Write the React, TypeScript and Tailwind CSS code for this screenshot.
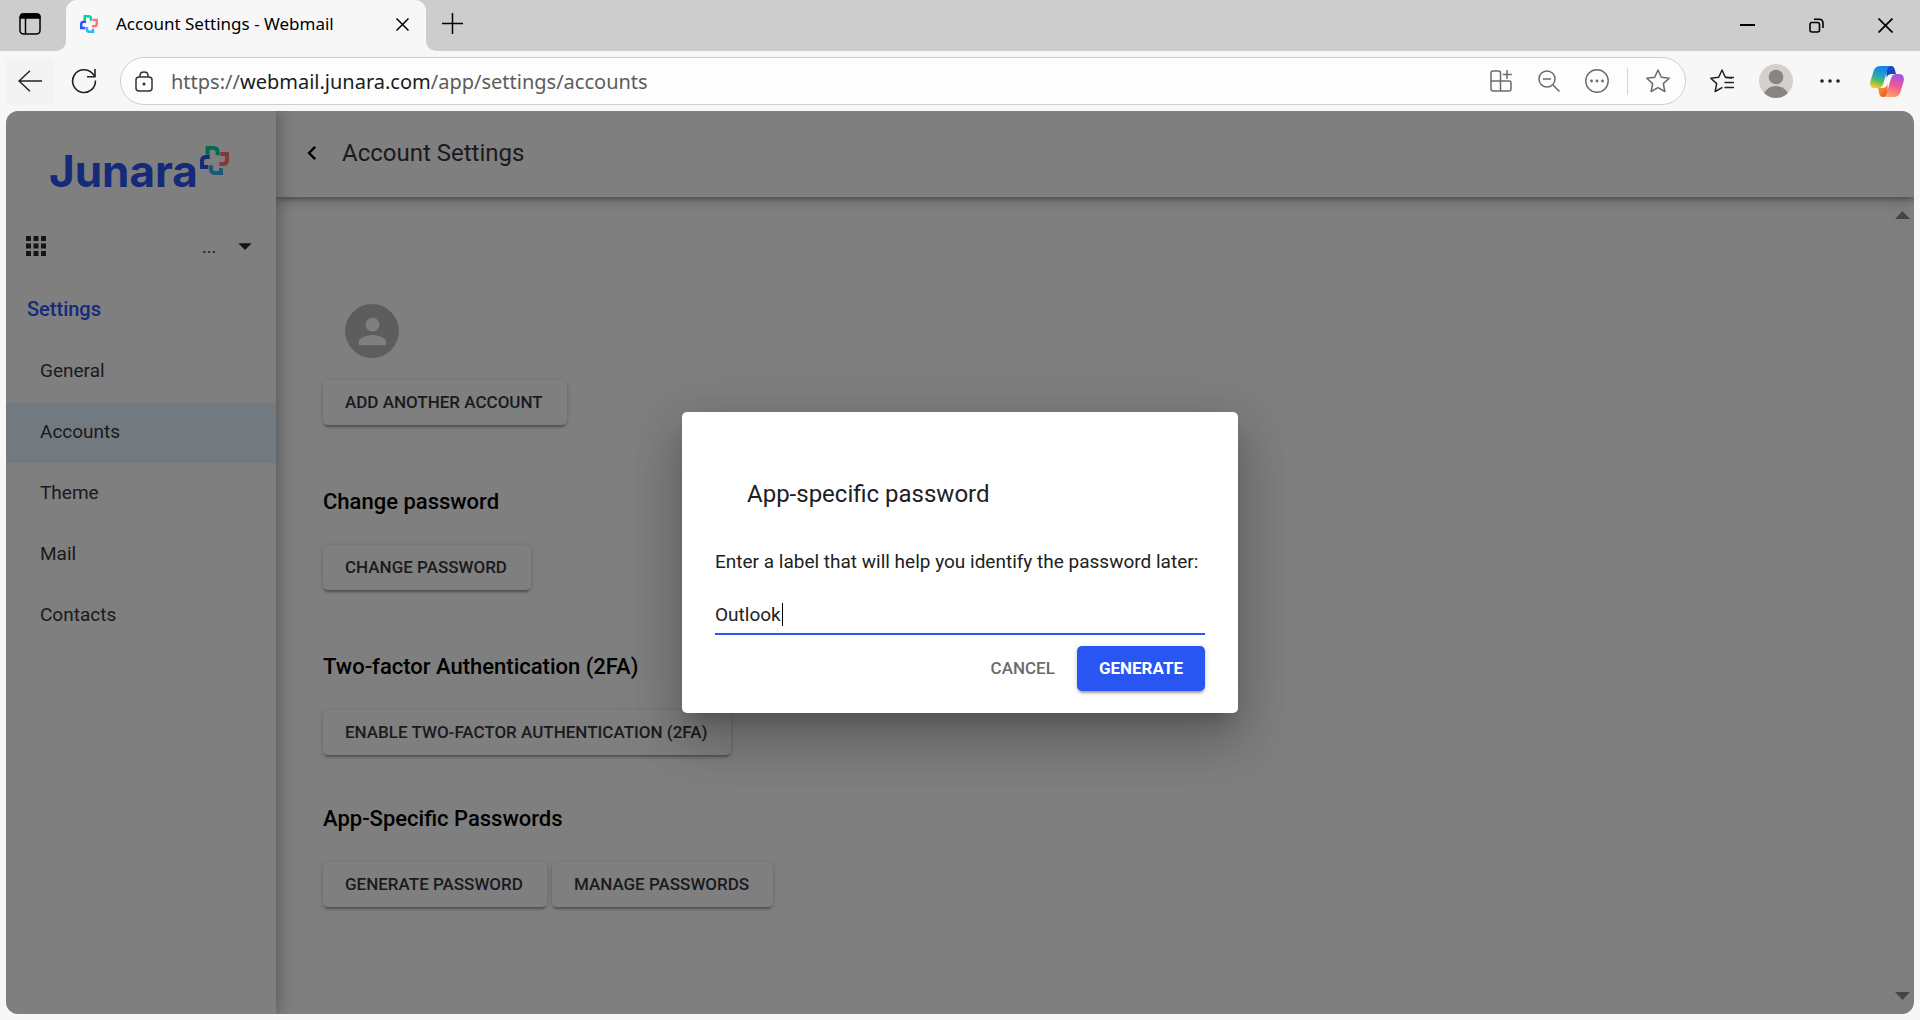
import { useState } from "react";
import type { ReactNode } from "react";
import { MdApps, MdArrowDropDown, MdChevronLeft, MdPerson } from "react-icons/md";

const navItems = ["General", "Accounts", "Theme", "Mail", "Contacts"];

function JunaraMark({ size }: { size: number }) {
	return (
		<svg width={size} height={size} viewBox="0 0 87 87" fill="none" strokeWidth="12">
			<path d="M23 26V6H40Q53 6 53 19V28" stroke="#00d69c" />
			<path d="M61 24H81V42Q81 54 68 54H58" stroke="#ff7478" />
			<path d="M68 72H63V81H45Q33 81 33 68V58" stroke="#2fb4f5" />
			<path d="M25 63H6V46Q6 33 19 33H29" stroke="#2d54f5" />
		</svg>
	);
}

function CopilotMark() {
	return (
		<svg width="34" height="31" viewBox="0 0 34 31">
			<defs>
				<linearGradient id="cp-left" x1="0.6" y1="0" x2="0.3" y2="1">
					<stop offset="0" stopColor="#1a7fe8" />
					<stop offset="0.35" stopColor="#1b9ad8" />
					<stop offset="0.65" stopColor="#4cb86a" />
					<stop offset="1" stopColor="#f2cf1d" />
				</linearGradient>
				<linearGradient id="cp-right" x1="0.7" y1="0" x2="0.35" y2="1">
					<stop offset="0" stopColor="#a052e8" />
					<stop offset="0.5" stopColor="#ee5a93" />
					<stop offset="1" stopColor="#ffa45c" />
				</linearGradient>
				<linearGradient id="cp-bottom" x1="0" y1="0" x2="1" y2="1">
					<stop offset="0" stopColor="#ffb12e" />
					<stop offset="1" stopColor="#e8472f" />
				</linearGradient>
			</defs>
			<path d="M16 0h5c2.400 0 3.200 1.600 3.800 3.600L26 8h-4c-3 0-4.500 1-5.400 4z" fill="#1546c4" />
			<path d="M18 31h-5c-2.400 0-3.200-1.600-3.800-3.600L8 22h4c3 0 4.500-1 5.400-4z" fill="url(#cp-bottom)" />
			<path d="M10.500 0H21c-2 0-3 1.400-3.700 3.700L13.500 17c-1 3.700-2.500 5-5 5H4.500C.8 22-.6 19.500.4 15.500L3.600 5C4.700 1.700 6.800 0 10.500 0z" fill="url(#cp-left)" />
			<path d="M23.500 31H13c2 0 3-1.400 3.700-3.700L20.500 14c1-3.700 2.500-6 5-6h4c3.700 0 5.100 3.500 4.100 7.500L30.400 26c-1.100 3.300-3.200 5-6.900 5z" fill="url(#cp-right)" />
		</svg>
	);
}

type BarButtonProps = { label: string; className: string; children: ReactNode };

function BarButton({ label, className, children }: BarButtonProps) {
	return (
		<button
			type="button"
			aria-label={label}
			className={`flex h-12 shrink-0 items-center justify-center rounded-md ${className}`}
		>
			{children}
		</button>
	);
}

function TabStrip() {
	return (
		<div className="flex h-[51px] items-stretch bg-[#cdcdcd] text-black">
			<button
				type="button"
				aria-label="Tab actions"
				className="flex w-[56px] items-center pb-[3px] pl-[19px]"
			>
				<svg width="22" height="22" viewBox="0 0 22 22" fill="none" stroke="black" strokeWidth="1.5">
					<rect x="1" y="1" width="20" height="20" rx="3.500" />
					<path d="M1.500 5V4Q1.500 1 4 1H18Q21 1 21 4V5Z" fill="black" />
					<path d="M6.500 5V21" />
				</svg>
			</button>
			<div className="h-[10px] w-[10px] self-end bg-[#f7f7f7]">
				<div className="h-full rounded-br-[10px] bg-[#cdcdcd]" />
			</div>
			<div className="flex w-[360px] items-center rounded-t-[11px] bg-[#f7f7f7] pr-[12px] pb-[3px] pl-[14px]">
				<JunaraMark size={18} />
				<span className="ml-[18px] flex-1 font-['Noto_Sans',sans-serif] text-[17px] whitespace-nowrap">
					Account Settings - Webmail
				</span>
				<button type="button" aria-label="Close tab" className="flex h-6 w-6 items-center justify-center">
					<svg width="13" height="13" viewBox="0 0 13 13" stroke="black" strokeWidth="1.5">
						<path d="M.5 .5L12.500 12.500M12.500 .5L.5 12.500" />
					</svg>
				</button>
			</div>
			<div className="h-[10px] w-[10px] self-end bg-[#f7f7f7]">
				<div className="h-full rounded-bl-[10px] bg-[#cdcdcd]" />
			</div>
			<button
				type="button"
				aria-label="New tab"
				className="flex w-[32px] items-center justify-center pb-[4px]"
			>
				<svg width="21" height="21" viewBox="0 0 21 21" stroke="black" strokeWidth="1.5">
					<path d="M10.500 0V21M0 10.500H21" />
				</svg>
			</button>
			<div className="ml-auto flex">
				<button type="button" aria-label="Minimize" className="flex w-[69px] items-center justify-center">
					<svg width="15" height="15" viewBox="0 0 15 15" stroke="black" strokeWidth="2">
						<path d="M0 7H15" />
					</svg>
				</button>
				<button type="button" aria-label="Restore" className="flex w-[69px] items-center justify-center">
					<svg width="15" height="15" viewBox="0 0 15 15" fill="none" stroke="black" strokeWidth="1.6">
						<rect x="1" y="4.500" width="9.500" height="9.500" rx="2" />
						<path d="M5 1.300H10Q14 1.300 14 5.300V10" />
					</svg>
				</button>
				<button type="button" aria-label="Close" className="flex w-[69px] items-center justify-center">
					<svg width="15" height="15" viewBox="0 0 15 15" stroke="black" strokeWidth="1.700">
						<path d="M.5 .5L14.500 14.500M14.500 .5L.5 14.500" />
					</svg>
				</button>
			</div>
		</div>
	);
}

function AddressBar() {
	return (
		<div className="flex h-[60px] items-center pt-[1px] pr-[3px] pb-[1px] pl-[6px] font-['Noto_Sans',sans-serif]">
			<BarButton label="Back" className="w-12 bg-[#f3f3f3]">
				<svg width="24" height="22" viewBox="0 0 24 22" fill="none" stroke="#222" strokeWidth="1.500">
					<path d="M24 11H1M12 .8L1 11L12 21.200" />
				</svg>
			</BarButton>
			<BarButton label="Refresh" className="ml-[6px] w-12">
				<svg width="26" height="26" viewBox="0 0 26 26" fill="none" stroke="#222" strokeWidth="1.600">
					<path d="M24.400 12.500A11.400 11.400 0 1 1 21.500 5.500L24 8.500" />
					<path d="M24 1V8.800H16" />
				</svg>
			</BarButton>
			<div className="ml-[12px] flex h-12 flex-1 items-center rounded-full border border-[#cfcfcf] bg-[#fdfdfd]">
				<button type="button" aria-label="Site information" className="flex w-[50px] items-center pl-[14px]">
					<svg width="18" height="21" viewBox="0 0 18 21" fill="none" stroke="#333" strokeWidth="1.500">
						<rect x="1" y="6" width="16" height="14" rx="3" />
						<path d="M5 6V4.500Q5 1 9 1T13 4.500V6" />
						<circle cx="9" cy="13" r="0.800" fill="#333" />
					</svg>
				</button>
				<div className="flex-1 pt-px text-[20px] whitespace-nowrap text-[#5c5c5c]">
					https://<span className="text-[#1b1b1b]">webmail.junara.com</span>/app/settings/accounts
				</div>
				<BarButton label="App available" className="w-12">
					<svg width="22" height="22" viewBox="0 0 22 22" fill="none" stroke="#6b6b6b" strokeWidth="1.500">
						<path d="M10.500 11V3Q10.500 1 8.500 1H3Q1 1 1 3V19Q1 21 3 21H19Q21 21 21 19V13Q21 11 19 11H1M10.500 11V21" />
						<path d="M17 0V9M12.800 4.500H21.800" />
					</svg>
				</BarButton>
				<BarButton label="Zoom out" className="w-12">
					<svg width="22" height="22" viewBox="0 0 22 22" fill="none" stroke="#6b6b6b" strokeWidth="1.500">
						<circle cx="9" cy="9" r="8" />
						<path d="M5 9H13M15 15L21.500 21.500" />
					</svg>
				</BarButton>
				<BarButton label="More page actions" className="w-12">
					<svg width="24" height="24" viewBox="0 0 24 24" fill="none" stroke="#6b6b6b" strokeWidth="1.400">
						<circle cx="12" cy="12" r="11.200" />
						<g fill="#6b6b6b" stroke="none">
							<circle cx="6.500" cy="12" r="1.400" />
							<circle cx="12" cy="12" r="1.400" />
							<circle cx="17.500" cy="12" r="1.400" />
						</g>
					</svg>
				</BarButton>
				<div className="mx-[6px] h-[27px] w-px bg-[#d5d5d5]" />
				<BarButton label="Add to favorites" className="mr-[3px] w-12">
					<svg width="24" height="24" viewBox="0 0 24 24" fill="none" stroke="#6b6b6b" strokeWidth="1.500" strokeLinejoin="round">
						<path d="M12 1L15.300 8.300L23.200 9.200L17.300 14.600L18.900 22.500L12 18.600L5.100 22.500L6.700 14.600L.8 9.200L8.700 8.300Z" />
					</svg>
				</BarButton>
			</div>
			<BarButton label="Favorites" className="ml-[9px] w-[54px]">
				<svg width="24" height="24" viewBox="0 0 24 24" fill="none" stroke="#222" strokeWidth="1.500" strokeLinejoin="round">
					<path d="M22 9L15.300 8.300L12 1L8.700 8.300L.8 9.200L6.700 14.600L5.100 22.500L12.500 18.400" />
					<path d="M15.500 8.500H24M14.500 13.500H24M14.500 18.500H24" />
				</svg>
			</BarButton>
			<BarButton label="Profile" className="w-[54px]">
				<svg width="34" height="34" viewBox="0 0 34 34">
					<clipPath id="profile-clip">
						<circle cx="17" cy="17" r="17" />
					</clipPath>
					<g clipPath="url(#profile-clip)">
						<rect width="34" height="34" fill="#d3d1ce" />
						<circle cx="17" cy="13" r="7.300" fill="#8a8582" />
						<ellipse cx="17" cy="33" rx="12.500" ry="11" fill="#8a8582" />
					</g>
				</svg>
			</BarButton>
			<BarButton label="Settings and more" className="w-[54px]">
				<svg width="20" height="4" viewBox="0 0 20 4" fill="#222">
					<circle cx="2" cy="2" r="1.800" />
					<circle cx="10" cy="2" r="1.800" />
					<circle cx="18" cy="2" r="1.800" />
				</svg>
			</BarButton>
			<BarButton label="Copilot" className="w-[60px]">
				<CopilotMark />
			</BarButton>
		</div>
	);
}

function Sidebar() {
	return (
		<aside className="z-10 flex w-[270px] shrink-0 flex-col bg-[#fefefe] text-[#36363e] shadow-[0_0_18px_rgba(0,0,0,0.4)]">
			<div className="flex h-[105px] items-start gap-[2px] pt-[35px] pl-[43px]">
				<span className="font-['Inter',sans-serif] text-[44px] leading-[50px] font-bold text-[#2d54f5]">
					Junara
				</span>
				<JunaraMark size={29} />
			</div>
			<div className="flex h-[60px] items-center pl-[15px]">
				<MdApps size={30} className="text-[#2a2a30]" />
				<div className="ml-[21px] h-[29px] w-[125px] bg-white" />
				<button
					type="button"
					aria-label="Switch account"
					className="ml-[5px] flex items-center gap-[9px] text-[18px]"
				>
					<span className="w-[18px] text-left">...</span>
					<MdArrowDropDown size={32} className="text-[#2a2a30]" />
				</button>
			</div>
			<h2 className="mt-[20px] pl-[21px] text-[20px] leading-[26px] font-medium text-[#2d54f5]">
				Settings
			</h2>
			<nav className="mt-[20px] flex flex-col gap-px">
				{navItems.map((item) => (
					<a
						key={item}
						href={`#${item.toLowerCase()}`}
						className={`flex h-[60px] items-center pb-px pl-[34px] text-[19px] ${
							item === "Accounts" ? "bg-[#e7f4fe]" : ""
						}`}
					>
						{item}
					</a>
				))}
			</nav>
		</aside>
	);
}

function RaisedButton({ children }: { children: string }) {
	return (
		<button
			type="button"
			className="h-[45px] rounded-[5px] bg-[#fefefe] pr-[24px] pl-[22px] text-[17px] font-medium text-[#36363e] uppercase shadow-[0_4px_2px_-2px_rgba(0,0,0,0.2),0_2px_3px_rgba(0,0,0,0.14),0_1px_6px_rgba(0,0,0,0.12)]"
		>
			{children}
		</button>
	);
}

type SectionProps = { title: string; className: string; actions: string[] };

function Section({ title, className, actions }: SectionProps) {
	return (
		<section className={className}>
			<h3 className="text-[22px] leading-[30px] font-medium text-black">{title}</h3>
			<div className="mt-[28px] flex gap-[5px]">
				{actions.map((action) => (
					<RaisedButton key={action}>{action}</RaisedButton>
				))}
			</div>
		</section>
	);
}

function AccountSettings() {
	return (
		<div className="flex min-w-0 flex-1 flex-col bg-[#fefefe]">
			<header className="relative flex h-[86px] items-center gap-[16px] pb-[2px] pl-[22px] text-[#36363e] shadow-[0_2px_5px_rgba(0,0,0,0.3),0_5px_12px_rgba(0,0,0,0.16)]">
				<button type="button" aria-label="Back to mail">
					<MdChevronLeft size={28} className="text-black" />
				</button>
				<h1 className="text-[24px]">Account Settings</h1>
			</header>
			<div className="flex flex-1">
				<main className="flex-1 pl-[47px]">
					<div className="mt-[107px] ml-[22px] flex items-center gap-4">
						<div className="flex h-[54px] w-[54px] items-center justify-center rounded-full bg-[#bababa] text-[#fefefe]">
							<MdPerson size={41} />
						</div>
						<div className="h-[36px] w-[228px] bg-white" />
					</div>
					<div className="mt-[22px]">
						<RaisedButton>Add another account</RaisedButton>
					</div>
					<Section title="Change password" className="mt-[62px]" actions={["Change password"]} />
					<Section
						title="Two-factor Authentication (2FA)"
						className="mt-[62px]"
						actions={["Enable two-factor authentication (2FA)"]}
					/>
					<Section
						title="App-Specific Passwords"
						className="mt-[49px]"
						actions={["Generate password", "Manage passwords"]}
					/>
				</main>
				<div className="flex w-[23px] flex-col items-center justify-between bg-[#fcfcfc] pt-[14px] pb-[14px]">
					<svg width="15" height="8" viewBox="0 0 15 8" fill="#8a8a8a">
						<path d="M0 8L7.500 0L15 8Z" />
					</svg>
					<svg width="15" height="8" viewBox="0 0 15 8" fill="#8a8a8a">
						<path d="M0 0L7.500 8L15 0Z" />
					</svg>
				</div>
			</div>
		</div>
	);
}

function PasswordDialog() {
	const [label, setLabel] = useState("Outlook");

	return (
		<div
			role="dialog"
			aria-labelledby="dialog-title"
			className="w-full max-w-[556px] rounded-[5px] bg-white px-[33px] pt-[66px] pb-[22px] text-[#212121] shadow-[0_14px_18px_-9px_rgba(0,0,0,0.2),0_30px_48px_4px_rgba(0,0,0,0.14),0_12px_58px_10px_rgba(0,0,0,0.12)]"
		>
			<h2 id="dialog-title" className="pl-[32px] text-[24px] leading-[32px]">
				App-specific password
			</h2>
			<form onSubmit={(e) => e.preventDefault()}>
				<label htmlFor="password-label" className="mt-[40px] block text-[19px] leading-[24px]">
					Enter a label that will help you identify the password later:
				</label>
				<div className="relative mt-[21px]">
					<input
						id="password-label"
						type="text"
						value={label}
						onChange={(e) => setLabel(e.target.value)}
						className="block h-[40px] w-full border-b-2 border-[#2955f3] text-[19px] outline-none"
					/>
					<span className="absolute top-[8px] left-[67px] h-[23px] w-px bg-black" />
				</div>
				<div className="mt-[11px] flex justify-end">
					<button type="button" className="px-[22px] text-[17px] font-medium text-[#6b6b6b]">
						CANCEL
					</button>
					<button
						type="submit"
						className="h-[45px] rounded-[5px] bg-[#2955f3] px-[22px] text-[17px] font-bold text-white shadow-[0_4px_2px_-2px_rgba(0,0,0,0.2),0_2px_3px_rgba(0,0,0,0.14),0_1px_6px_rgba(0,0,0,0.12)]"
					>
						GENERATE
					</button>
				</div>
			</form>
		</div>
	);
}

export default function App() {
	return (
		<div className="flex min-h-screen flex-col bg-[#f7f7f7] font-['Roboto',sans-serif]">
			<TabStrip />
			<AddressBar />
			<div className="flex flex-1 flex-col px-[6px] pb-[6px]">
				<div className="relative flex flex-1 overflow-hidden rounded-[12px]">
					<Sidebar />
					<AccountSettings />
					<div className="absolute inset-0 z-20 flex items-center justify-center bg-black/50">
						<PasswordDialog />
					</div>
				</div>
			</div>
		</div>
	);
}
